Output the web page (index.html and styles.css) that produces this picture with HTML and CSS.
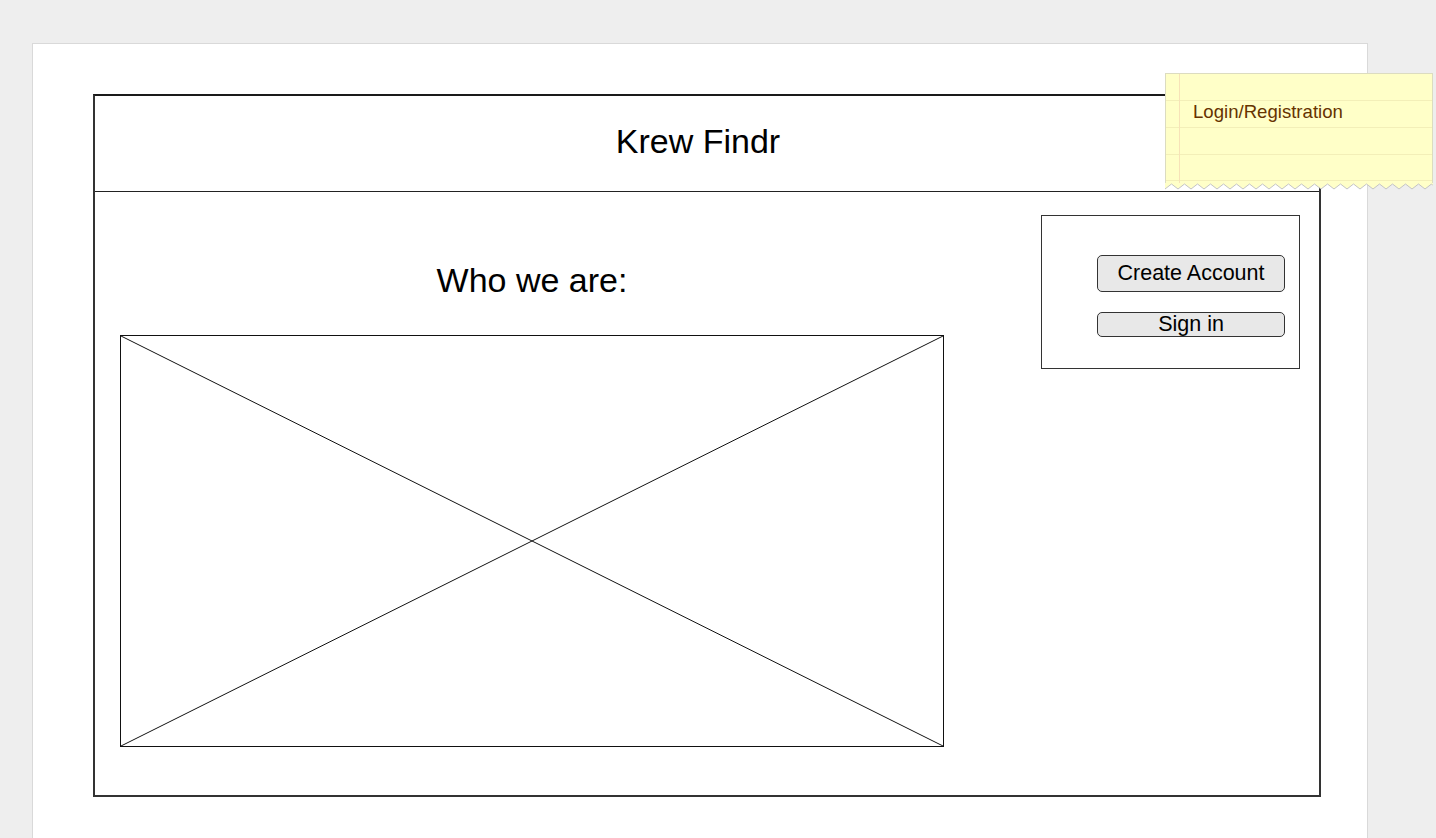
FILE: index.html
```html
<!DOCTYPE html>
<html>
<head>
<meta charset="utf-8">
<link rel="stylesheet" href="styles.css">
</head>
<body>
<div class="page">
  <div class="frame">
    <header class="header"><h1 class="site-title">Krew Findr</h1></header>
    <div class="content">
      <div class="main-col">
        <h2 class="section-title">Who we are:</h2>
        <div class="placeholder">
          <svg class="cross" viewBox="0 0 100 100" preserveAspectRatio="none">
            <line x1="0" y1="0" x2="100" y2="100" vector-effect="non-scaling-stroke"/>
            <line x1="100" y1="0" x2="0" y2="100" vector-effect="non-scaling-stroke"/>
          </svg>
        </div>
      </div>
      <div class="auth-box">
        <button class="btn btn-create">Create Account</button>
        <button class="btn btn-signin">Sign in</button>
      </div>
    </div>
  </div>
</div>
<div class="note">
  <div class="note-body">Login/Registration</div>
  <svg class="note-edge" width="268" height="7" viewBox="0 0 268 7">
    <polygon class="edge-fill" points="0,0 0,6 6.5,1 13,6 19.5,1 26,6 32.5,1 39,6 45.5,1 52,6 58.5,1 65,6 71.5,1 78,6 84.5,1 91,6 97.5,1 104,6 110.5,1 117,6 123.5,1 130,6 136.5,1 143,6 149.5,1 156,6 162.5,1 169,6 175.5,1 182,6 188.5,1 195,6 201.5,1 208,6 214.5,1 221,6 227.5,1 234,6 240.5,1 247,6 253.5,1 260,6 266.5,1 268,2.5 268,0"/>
    <polyline class="edge-line" points="0,6 6.5,1 13,6 19.5,1 26,6 32.5,1 39,6 45.5,1 52,6 58.5,1 65,6 71.5,1 78,6 84.5,1 91,6 97.5,1 104,6 110.5,1 117,6 123.5,1 130,6 136.5,1 143,6 149.5,1 156,6 162.5,1 169,6 175.5,1 182,6 188.5,1 195,6 201.5,1 208,6 214.5,1 221,6 227.5,1 234,6 240.5,1 247,6 253.5,1 260,6 266.5,1 268,2.5"/>
  </svg>
</div>
</body>
</html>
```

FILE: styles.css
```css
* { box-sizing: border-box; }

html, body {
  margin: 0;
  padding: 0;
  background: #eeeeee;
  font-family: "Liberation Sans", Arial, Helvetica, sans-serif;
  overflow: hidden;
}

.page {
  margin: 43px 0 0 32px;
  width: 1336px;
  height: 795px;
  background: #ffffff;
  border: 1px solid #d9d9d9;
  border-bottom: none;
  padding: 50px 0 0 60px;
}

.frame {
  width: 1228px;
  height: 703px;
  border: 2px solid #333333;
  border-top-color: #1a1a1a;
  display: flex;
  flex-direction: column;
}

.header {
  height: 96px;
  border-bottom: 1px solid #222222;
  padding: 25px 18px 0 0;
}

.site-title {
  margin: 0;
  font-size: 34px;
  line-height: 40px;
  font-weight: normal;
  text-align: center;
  color: #000;
}

.content {
  flex: 1;
  display: flex;
  justify-content: space-between;
  align-items: flex-start;
  padding: 23px 19px 0 25px;
}

.main-col {
  width: 824px;
}

.section-title {
  margin: 45px 0 0 0;
  font-size: 34px;
  line-height: 40px;
  font-weight: normal;
  text-align: center;
  color: #000;
}

.placeholder {
  margin-top: 35px;
  width: 824px;
  height: 412px;
  border: 1px solid #111;
}

.cross {
  display: block;
  width: 100%;
  height: 100%;
}

.cross line {
  stroke: #111;
  stroke-width: 1;
}

.auth-box {
  width: 259px;
  height: 154px;
  border: 1px solid #333;
  padding: 39px 0 0 55px;
  display: flex;
  flex-direction: column;
  gap: 20px;
}

.btn {
  width: 188px;
  border: 1px solid #333;
  border-radius: 5px;
  background: #e8e8e8;
  font-family: "Liberation Sans", Arial, Helvetica, sans-serif;
  font-size: 21.5px;
  line-height: 1;
  color: #000;
  padding: 0;
  display: flex;
  align-items: center;
  justify-content: center;
}

.btn-create { height: 37px; }
.btn-signin { height: 25px; }

.note {
  position: absolute;
  left: 1165px;
  top: 73px;
  width: 268px;
}

.note-body {
  height: 110px;
  border: 1px solid #dcdcc0;
  border-bottom: none;
  padding: 27px 0 0 27px;
  font-size: 18.6px;
  line-height: 22px;
  color: #663300;
  background-color: #ffffc8;
  background-image:
    linear-gradient(to right, transparent 13px, #f7e2b8 13px, #f7e2b8 14px, transparent 14px),
    linear-gradient(to bottom, transparent 26px, #f3efb8 26px, #f3efb8 27px, transparent 27px, transparent 53px, #f3efb8 53px, #f3efb8 54px, transparent 54px, transparent 80px, #f3efb8 80px, #f3efb8 81px, transparent 81px, transparent 106px, #f3efb8 106px, #f3efb8 107px, transparent 107px);
}

.note-edge {
  display: block;
}

.edge-fill {
  fill: #ffffc8;
}

.edge-line {
  fill: none;
  stroke: #c4c4c4;
  stroke-width: 1;
}
```
